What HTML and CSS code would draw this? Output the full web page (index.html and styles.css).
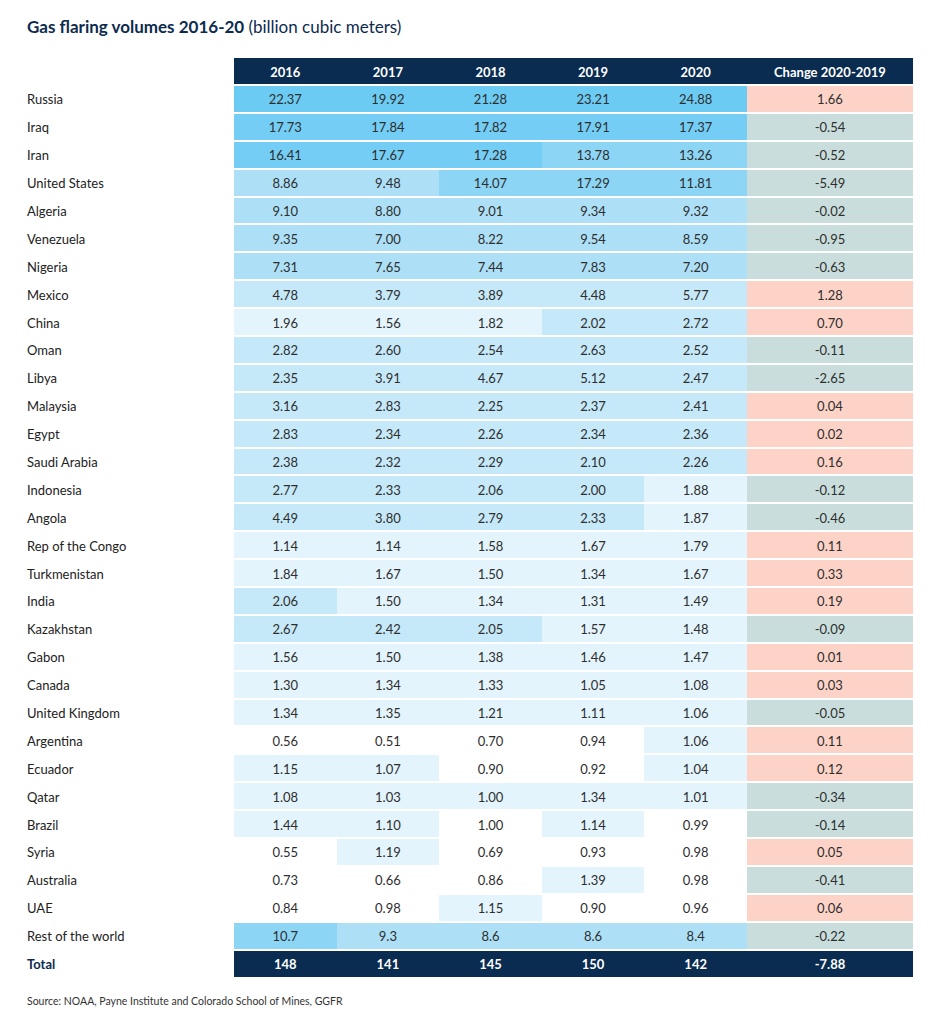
FILE: index.html
```html
<!DOCTYPE html>
<html lang="en">
<head>
<meta charset="utf-8">
<title>Gas flaring volumes 2016-20</title>
<link rel="stylesheet" href="styles.css">
</head>
<body>
<div class="page">
  <h1 class="title">Gas flaring volumes 2016-20 <span>(billion cubic meters)</span></h1>
  <div class="table">
    <div class="row head"><div class="cell label"></div><div class="cell">2016</div><div class="cell">2017</div><div class="cell">2018</div><div class="cell">2019</div><div class="cell">2020</div><div class="cell">Change 2020-2019</div></div>
    <div class="row"><div class="cell label">Russia</div><div class="cell b6">22.37</div><div class="cell b6">19.92</div><div class="cell b6">21.28</div><div class="cell b6">23.21</div><div class="cell b6">24.88</div><div class="cell pos">1.66</div></div>
    <div class="row"><div class="cell label">Iraq</div><div class="cell b5">17.73</div><div class="cell b5">17.84</div><div class="cell b5">17.82</div><div class="cell b5">17.91</div><div class="cell b5">17.37</div><div class="cell neg">-0.54</div></div>
    <div class="row"><div class="cell label">Iran</div><div class="cell b5">16.41</div><div class="cell b5">17.67</div><div class="cell b5">17.28</div><div class="cell b4">13.78</div><div class="cell b4">13.26</div><div class="cell neg">-0.52</div></div>
    <div class="row"><div class="cell label">United States</div><div class="cell b3">8.86</div><div class="cell b3">9.48</div><div class="cell b4">14.07</div><div class="cell b4">17.29</div><div class="cell b4">11.81</div><div class="cell neg">-5.49</div></div>
    <div class="row"><div class="cell label">Algeria</div><div class="cell b3">9.10</div><div class="cell b3">8.80</div><div class="cell b3">9.01</div><div class="cell b3">9.34</div><div class="cell b3">9.32</div><div class="cell neg">-0.02</div></div>
    <div class="row"><div class="cell label">Venezuela</div><div class="cell b3">9.35</div><div class="cell b3">7.00</div><div class="cell b3">8.22</div><div class="cell b3">9.54</div><div class="cell b3">8.59</div><div class="cell neg">-0.95</div></div>
    <div class="row"><div class="cell label">Nigeria</div><div class="cell b3">7.31</div><div class="cell b3">7.65</div><div class="cell b3">7.44</div><div class="cell b3">7.83</div><div class="cell b3">7.20</div><div class="cell neg">-0.63</div></div>
    <div class="row"><div class="cell label">Mexico</div><div class="cell b2">4.78</div><div class="cell b2">3.79</div><div class="cell b2">3.89</div><div class="cell b2">4.48</div><div class="cell b2">5.77</div><div class="cell pos">1.28</div></div>
    <div class="row"><div class="cell label">China</div><div class="cell b1">1.96</div><div class="cell b1">1.56</div><div class="cell b1">1.82</div><div class="cell b2">2.02</div><div class="cell b2">2.72</div><div class="cell pos">0.70</div></div>
    <div class="row"><div class="cell label">Oman</div><div class="cell b2">2.82</div><div class="cell b2">2.60</div><div class="cell b2">2.54</div><div class="cell b2">2.63</div><div class="cell b2">2.52</div><div class="cell neg">-0.11</div></div>
    <div class="row"><div class="cell label">Libya</div><div class="cell b2">2.35</div><div class="cell b2">3.91</div><div class="cell b2">4.67</div><div class="cell b2">5.12</div><div class="cell b2">2.47</div><div class="cell neg">-2.65</div></div>
    <div class="row"><div class="cell label">Malaysia</div><div class="cell b2">3.16</div><div class="cell b2">2.83</div><div class="cell b2">2.25</div><div class="cell b2">2.37</div><div class="cell b2">2.41</div><div class="cell pos">0.04</div></div>
    <div class="row"><div class="cell label">Egypt</div><div class="cell b2">2.83</div><div class="cell b2">2.34</div><div class="cell b2">2.26</div><div class="cell b2">2.34</div><div class="cell b2">2.36</div><div class="cell pos">0.02</div></div>
    <div class="row"><div class="cell label">Saudi Arabia</div><div class="cell b2">2.38</div><div class="cell b2">2.32</div><div class="cell b2">2.29</div><div class="cell b2">2.10</div><div class="cell b2">2.26</div><div class="cell pos">0.16</div></div>
    <div class="row"><div class="cell label">Indonesia</div><div class="cell b2">2.77</div><div class="cell b2">2.33</div><div class="cell b2">2.06</div><div class="cell b2">2.00</div><div class="cell b1">1.88</div><div class="cell neg">-0.12</div></div>
    <div class="row"><div class="cell label">Angola</div><div class="cell b2">4.49</div><div class="cell b2">3.80</div><div class="cell b2">2.79</div><div class="cell b2">2.33</div><div class="cell b1">1.87</div><div class="cell neg">-0.46</div></div>
    <div class="row"><div class="cell label">Rep of the Congo</div><div class="cell b1">1.14</div><div class="cell b1">1.14</div><div class="cell b1">1.58</div><div class="cell b1">1.67</div><div class="cell b1">1.79</div><div class="cell pos">0.11</div></div>
    <div class="row"><div class="cell label">Turkmenistan</div><div class="cell b1">1.84</div><div class="cell b1">1.67</div><div class="cell b1">1.50</div><div class="cell b1">1.34</div><div class="cell b1">1.67</div><div class="cell pos">0.33</div></div>
    <div class="row"><div class="cell label">India</div><div class="cell b2">2.06</div><div class="cell b1">1.50</div><div class="cell b1">1.34</div><div class="cell b1">1.31</div><div class="cell b1">1.49</div><div class="cell pos">0.19</div></div>
    <div class="row"><div class="cell label">Kazakhstan</div><div class="cell b2">2.67</div><div class="cell b2">2.42</div><div class="cell b2">2.05</div><div class="cell b1">1.57</div><div class="cell b1">1.48</div><div class="cell neg">-0.09</div></div>
    <div class="row"><div class="cell label">Gabon</div><div class="cell b1">1.56</div><div class="cell b1">1.50</div><div class="cell b1">1.38</div><div class="cell b1">1.46</div><div class="cell b1">1.47</div><div class="cell pos">0.01</div></div>
    <div class="row"><div class="cell label">Canada</div><div class="cell b1">1.30</div><div class="cell b1">1.34</div><div class="cell b1">1.33</div><div class="cell b1">1.05</div><div class="cell b1">1.08</div><div class="cell pos">0.03</div></div>
    <div class="row"><div class="cell label">United Kingdom</div><div class="cell b1">1.34</div><div class="cell b1">1.35</div><div class="cell b1">1.21</div><div class="cell b1">1.11</div><div class="cell b1">1.06</div><div class="cell neg">-0.05</div></div>
    <div class="row"><div class="cell label">Argentina</div><div class="cell b0">0.56</div><div class="cell b0">0.51</div><div class="cell b0">0.70</div><div class="cell b0">0.94</div><div class="cell b1">1.06</div><div class="cell pos">0.11</div></div>
    <div class="row"><div class="cell label">Ecuador</div><div class="cell b1">1.15</div><div class="cell b1">1.07</div><div class="cell b0">0.90</div><div class="cell b0">0.92</div><div class="cell b1">1.04</div><div class="cell pos">0.12</div></div>
    <div class="row"><div class="cell label">Qatar</div><div class="cell b1">1.08</div><div class="cell b1">1.03</div><div class="cell b1">1.00</div><div class="cell b1">1.34</div><div class="cell b1">1.01</div><div class="cell neg">-0.34</div></div>
    <div class="row"><div class="cell label">Brazil</div><div class="cell b1">1.44</div><div class="cell b1">1.10</div><div class="cell b0">1.00</div><div class="cell b1">1.14</div><div class="cell b0">0.99</div><div class="cell neg">-0.14</div></div>
    <div class="row"><div class="cell label">Syria</div><div class="cell b0">0.55</div><div class="cell b1">1.19</div><div class="cell b0">0.69</div><div class="cell b0">0.93</div><div class="cell b0">0.98</div><div class="cell pos">0.05</div></div>
    <div class="row"><div class="cell label">Australia</div><div class="cell b0">0.73</div><div class="cell b0">0.66</div><div class="cell b0">0.86</div><div class="cell b1">1.39</div><div class="cell b0">0.98</div><div class="cell neg">-0.41</div></div>
    <div class="row"><div class="cell label">UAE</div><div class="cell b0">0.84</div><div class="cell b0">0.98</div><div class="cell b1">1.15</div><div class="cell b0">0.90</div><div class="cell b0">0.96</div><div class="cell pos">0.06</div></div>
    <div class="row"><div class="cell label">Rest of the world</div><div class="cell b4">10.7</div><div class="cell b3">9.3</div><div class="cell b3">8.6</div><div class="cell b3">8.6</div><div class="cell b3">8.4</div><div class="cell neg">-0.22</div></div>
    <div class="row total"><div class="cell label">Total</div><div class="cell">148</div><div class="cell">141</div><div class="cell">145</div><div class="cell">150</div><div class="cell">142</div><div class="cell">-7.88</div></div>
  </div>
  <p class="source">Source: NOAA, Payne Institute and Colorado School of Mines, GGFR</p>
</div>
</body>
</html>
```

FILE: styles.css
```css
body {
  margin: 0;
  background: #ffffff;
  font-family: Lato, "Noto Sans", sans-serif;
  color: #2e2e2e;
}

.page {
  padding: 17px 0 0 27px;
}

.title {
  margin: 0;
  font-size: 17px;
  line-height: 20px;
  font-weight: 700;
  color: #0c2b4e;
}

.title span {
  font-weight: 400;
}

.table {
  margin-top: 21px;
  display: grid;
  row-gap: 2px;
  width: 886px;
}

.row {
  display: grid;
  grid-template-columns: 207px repeat(5, 102.6px) 166px;
  height: 25.9px;
}

.cell {
  display: flex;
  align-items: center;
  justify-content: center;
  padding-top: 1px;
  font-size: 13px;
  white-space: nowrap;
}

.cell.label {
  justify-content: flex-start;
  color: #222222;
}

.head {
  height: 26px;
}

.head .cell {
  background: #0a2c51;
  color: #ffffff;
  font-weight: 700;
}

.head .cell.label,
.total .cell.label {
  background: #ffffff;
}

.total .cell {
  background: #0a2c51;
  color: #ffffff;
  font-weight: 700;
}

.total .cell.label {
  color: #0c2b4e;
}

.b0 { background: #ffffff; }
.b1 { background: #e3f4fc; }
.b2 { background: #c6e9f9; }
.b3 { background: #ade0f7; }
.b4 { background: #8cd5f5; }
.b5 { background: #74cdf4; }
.b6 { background: #6ccbf3; }

.pos { background: #fdd3c7; }
.neg { background: #c9dedc; }

.source {
  margin: 18px 0 0;
  font-size: 10.5px;
  line-height: 12px;
  color: #333333;
}
```
